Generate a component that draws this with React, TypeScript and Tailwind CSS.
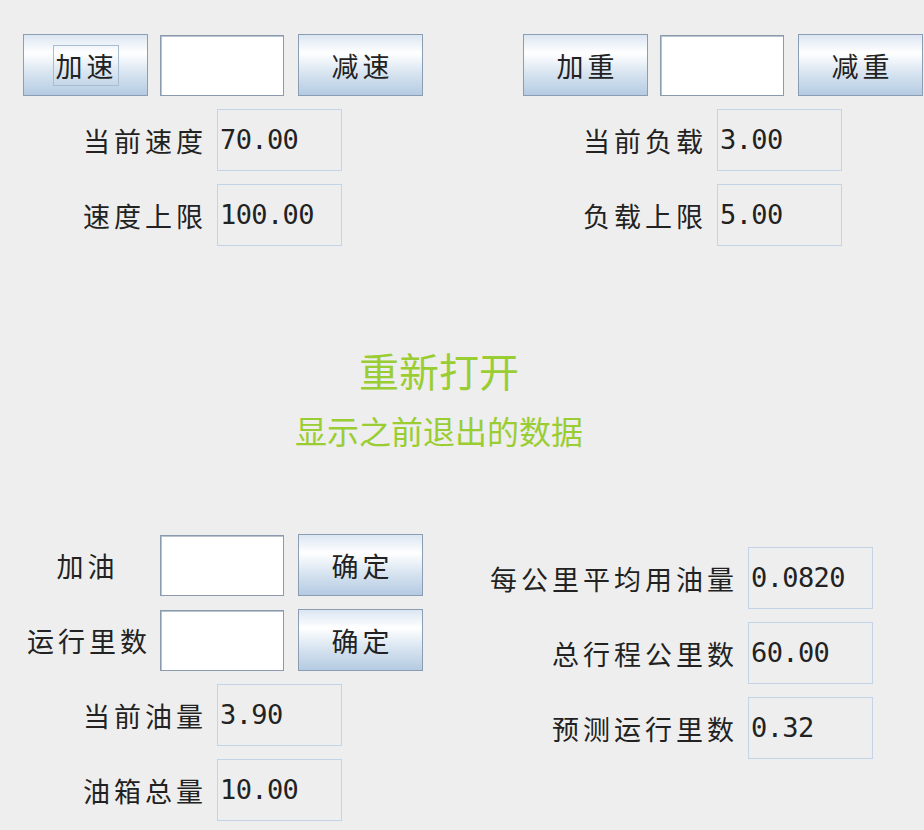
import React from 'react';

const kai = "font-['Noto_Sans_CJK_SC','Noto_Sans_CJK_JP',sans-serif]";
const mono = "font-['DejaVu_Sans_Mono','Liberation_Mono',monospace]";

const SwingButton: React.FC<{ label: string; focused?: boolean }> = ({ label, focused }) => (
    <button
        className={`w-[125px] h-[62px] shrink-0 flex items-center justify-center border border-[#8a9db2] bg-[linear-gradient(to_bottom,#dbe6f2_0%,#ffffff_30%,#d6e3f0_65%,#b5cbe2_100%)] text-[#222] text-[27px] leading-none tracking-[4px] ${kai}`}
    >
        {focused ? (
            <span className="border border-[#a9bdd2] pl-[2px] pr-[0px] py-[6px] leading-none">{label}</span>
        ) : (
            <span className="pl-[4px]">{label}</span>
        )}
    </button>
);

const InputField: React.FC = () => (
    <input
        type="text"
        className="w-[124px] h-[61px] shrink-0 bg-white border border-[#8a9bae] shadow-[inset_1px_1px_0_#b7c2ce] outline-none"
    />
);

const ReadOnlyField: React.FC<{ value: string }> = ({ value }) => (
    <div
        className={`w-[125px] h-[62px] shrink-0 flex items-center pl-[2px] border border-[#c3d4e6] text-[#222] text-[27px] tracking-[-0.6px] ${mono}`}
    >
        {value}
    </div>
);

const LabelRow: React.FC<{ label: string; value: string; labelWidth: number }> = ({ label, value, labelWidth }) => (
    <div className="flex items-center h-[62px]">
        <div style={{ width: labelWidth }} className="shrink-0 flex justify-end pr-[10px]">
            <span className={`text-[27px] tracking-[4px] text-[#222] leading-none whitespace-nowrap ${kai}`}>
                {label}
            </span>
        </div>
        <ReadOnlyField value={value} />
    </div>
);

const TopPanel: React.FC<{ plus: string; minus: string; focused?: boolean; rows: [string, string][] }> = ({ plus, minus, focused, rows }) => (
    <div className="w-[500px] shrink-0 flex flex-col gap-[13px]">
        <div className="flex items-center pl-[23px]">
            <SwingButton label={plus} focused={focused} />
            <div className="ml-[12px]">
                <InputField />
            </div>
            <div className="ml-[14px]">
                <SwingButton label={minus} />
            </div>
        </div>
        {rows.map(([l, v]) => (
            <LabelRow key={l} label={l} value={v} labelWidth={217} />
        ))}
    </div>
);

const InputRow: React.FC<{ label: string }> = ({ label }) => (
    <div className="flex items-center pl-[23px]">
        <div className={`w-[125px] text-center text-[27px] tracking-[4px] pl-[4px] text-[#222] leading-none whitespace-nowrap ${kai}`}>
            {label}
        </div>
        <div className="ml-[12px]">
            <InputField />
        </div>
        <div className="ml-[14px]">
            <SwingButton label="确定" />
        </div>
    </div>
);

export default function App() {
    return (
        <div className="w-[924px] h-[830px] bg-[#eeeeee] overflow-hidden flex flex-col pt-[34px]">
            <div className="flex">
                <TopPanel
                    plus="加速"
                    minus="减速"
                    focused
                    rows={[
                        ['当前速度', '70.00'],
                        ['速度上限', '100.00'],
                    ]}
                />
                <TopPanel
                    plus="加重"
                    minus="减重"
                    rows={[
                        ['当前负载', '3.00'],
                        ['负载上限', '5.00'],
                    ]}
                />
            </div>

            <div className={`w-[878px] flex flex-col items-center mt-[100px] text-[#9acd32] ${kai}`}>
                <div className="text-[40px] leading-[48px]">重新打开</div>
                <div className="text-[32px] leading-[40px] mt-[16px]">显示之前退出的数据</div>
            </div>

            <div className="flex mt-[84px]">
                <div className="w-[500px] shrink-0 flex flex-col gap-[13px]">
                    <InputRow label="加油" />
                    <InputRow label="运行里数" />
                    <LabelRow label="当前油量" value="3.90" labelWidth={217} />
                    <LabelRow label="油箱总量" value="10.00" labelWidth={217} />
                </div>
                <div className="w-[424px] shrink-0 flex flex-col gap-[13px] pt-[13px]">
                    <LabelRow label="每公里平均用油量" value="0.0820" labelWidth={248} />
                    <LabelRow label="总行程公里数" value="60.00" labelWidth={248} />
                    <LabelRow label="预测运行里数" value="0.32" labelWidth={248} />
                </div>
            </div>
        </div>
    );
}
